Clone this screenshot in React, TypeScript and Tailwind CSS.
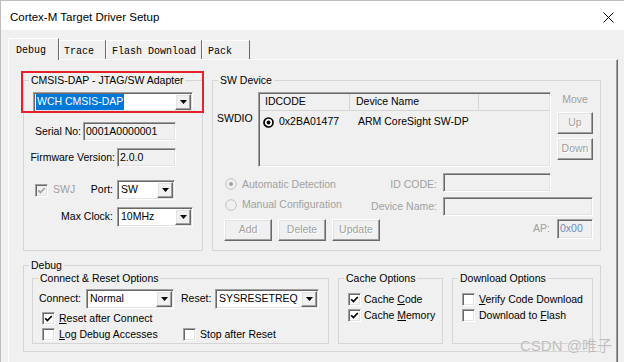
import React from 'react';

const sunken =
  'border border-t-[#a0a0a0] border-l-[#a0a0a0] border-r-white border-b-white shadow-[inset_1px_1px_0_#696969,inset_-1px_-1px_0_#e3e3e3]';
const raised =
  'border border-t-white border-l-white border-r-[#696969] border-b-[#696969] shadow-[inset_-1px_-1px_0_#a0a0a0,inset_1px_1px_0_#e3e3e3]';

function Arrow() {
  return (
    <svg width="7" height="4" viewBox="0 0 7 4">
      <polygon points="0,0 7,0 3.5,4" fill="#000" />
    </svg>
  );
}

function Combo({ className, text, selected }: { className: string; text: string; selected?: boolean }) {
  return (
    <div className={`flex h-[20px] p-[1px] bg-white ${sunken} ${className}`}>
      <div className="flex-1 flex items-center pl-[1px] overflow-hidden whitespace-nowrap">
        {selected ? <span className="bg-[#0078d7] text-white pl-[1px] pr-[1px]">{text}</span> : <span className="pl-[1px]">{text}</span>}
      </div>
      <div className={`w-[16px] h-[16px] bg-[#f0f0f0] flex items-center justify-center ${raised}`}>
        <Arrow />
      </div>
    </div>
  );
}

function Edit({ className, text }: { className: string; text?: string }) {
  return (
    <div className={`h-[19px] bg-[#f0f0f0] flex items-center pl-[2px] ${sunken} ${className}`}>
      {text}
    </div>
  );
}

function Btn({ className, children }: { className: string; children: React.ReactNode }) {
  return (
    <div className={`flex items-center justify-center bg-[#f0f0f0] text-[#a0a0a0] [text-shadow:1px_1px_0_#fff] ${raised} ${className}`}>
      {children}
    </div>
  );
}

function Check({ checked, disabled }: { checked?: boolean; disabled?: boolean }) {
  return (
    <div className={`w-[13px] h-[13px] flex items-center justify-center shrink-0 ${sunken} ${disabled ? 'bg-[#f0f0f0]' : 'bg-white'}`}>
      {checked && (
        <svg width="9" height="9" viewBox="0 0 9 9">
          <path d="M1.2 4.2 L3.4 6.6 L7.8 2" fill="none" stroke={disabled ? '#a0a0a0' : '#000'} strokeWidth="1.7" />
        </svg>
      )}
    </div>
  );
}

function Radio({ on }: { on?: boolean }) {
  return (
    <svg width="12" height="12" viewBox="0 0 12 12" className="shrink-0">
      <circle cx="6" cy="6" r="5.3" fill="#f0f0f0" stroke="#c2c2c2" strokeWidth="1" />
      {on && <circle cx="6" cy="6" r="2" fill="#a0a0a0" />}
    </svg>
  );
}

function Group({ title, className, children }: { title: string; className: string; children: React.ReactNode }) {
  return (
    <fieldset className={`border border-[#d5d5d5] ${className}`}>
      <legend className="ml-[5px] px-[2px] leading-[13px]">{title}</legend>
      {children}
    </fieldset>
  );
}

export default function App() {
  return (
    <div className="relative w-[624px] h-[362px] overflow-hidden bg-[#f0f0f0] border-l border-t border-[#bdbdbd] text-[10.5px] text-black font-['Liberation_Sans',Arial,sans-serif]">
      {/* Title bar */}
      <div className="h-[29px] bg-white flex items-center justify-between pl-[9px] pr-[10px] pt-[4px]">
        <span className="text-[11.5px]">Cortex-M Target Driver Setup</span>
        <svg width="11" height="11" viewBox="0 0 11 11" className="mb-[1px]">
          <path d="M0.5 0.5 L10.5 10.5 M10.5 0.5 L0.5 10.5" stroke="#000" strokeWidth="1" />
        </svg>
      </div>

      {/* Tabs */}
      <div className="flex items-end h-[29px] pt-[8px] pl-[7px] font-['Liberation_Mono',monospace] text-[10px]">
        <div className="relative z-10 -mb-[1px] h-[22px] w-[51px] bg-[#f0f0f0] border-t border-l border-r border-t-white border-l-white border-r-[#696969] pl-[7px] pt-[4px]">
          Debug
        </div>
        <div className="h-[19px] w-[47px] border-t border-l border-r border-t-white border-l-white border-r-[#696969] pl-[4px] pt-[3px]">Trace</div>
        <div className="h-[19px] w-[96px] border-t border-l border-r border-t-white border-l-white border-r-[#696969] pl-[5px] pt-[3px]">Flash Download</div>
        <div className="h-[19px] w-[48px] border-t border-l border-r border-t-white border-l-white border-r-[#696969] pl-[5px] pt-[3px]">Pack</div>
      </div>

      {/* Tab panel */}
      <div className="ml-[7px] w-[610px] h-[303px] border-t border-l border-r border-t-white border-l-white border-r-[#696969] shadow-[inset_-1px_0_0_#a0a0a0] pl-[14px] pt-[14px]">
        <div className="flex gap-[9px]">
          {/* CMSIS-DAP adapter */}
          <Group title="CMSIS-DAP - JTAG/SW Adapter" className="w-[180px]">
            <div className="flow-root h-[163px]">
              <div className="ml-[9px] mt-[5px]">
                <Combo className="w-[160px]" text="WCH CMSIS-DAP" selected />
              </div>
              <div className="flex items-center mt-[10px]">
                <span className="w-[57px] text-right">Serial No:</span>
                <Edit className="ml-[2px] w-[93px]" text="0001A0000001" />
              </div>
              <div className="flex items-center mt-[7px]">
                <span className="w-[91px] text-right">Firmware Version:</span>
                <Edit className="ml-[2px] w-[59px]" text="2.0.0" />
              </div>
              <div className="flex items-center mt-[13px]">
                <div className="w-[89px] flex items-center pl-[11px]">
                  <Check checked disabled />
                  <span className="ml-[5px] text-[#a0a0a0]">SWJ</span>
                  <span className="ml-auto">Port:</span>
                </div>
                <Combo className="ml-[4px] w-[58px]" text="SW" />
              </div>
              <div className="flex items-center mt-[7px]">
                <span className="w-[89px] text-right">Max Clock:</span>
                <Combo className="ml-[4px] w-[76px]" text="10MHz" />
              </div>
            </div>
          </Group>

          {/* SW Device */}
          <Group title="SW Device" className="w-[389px]">
            <div className="flow-root h-[163px]">
              <div className="flex mt-[5px] h-[75px]">
                <div className="w-[45px] pl-[4px] pt-[20px] leading-[13px]">SWDIO</div>
                <div className={`w-[293px] h-[75px] p-[1px] ${sunken}`}>
                  <div className="flex h-[17px] border-b border-[#d5d5d5] items-center">
                    <div className="w-[90px] h-full border-r border-[#d5d5d5] pl-[5px] flex items-center">IDCODE</div>
                    <div className="w-[129px] h-full border-r border-[#d5d5d5] pl-[6px] flex items-center">Device Name</div>
                    <div className="flex-1" />
                  </div>
                  <div className="flex items-center h-[16px] mt-[3px]">
                    <div className="w-[90px] flex items-center pl-[3px]">
                      <svg width="11" height="11" viewBox="0 0 11 11">
                        <circle cx="5.5" cy="5.5" r="4.5" fill="#fff" stroke="#000" strokeWidth="1.7" />
                        <circle cx="5.5" cy="5.5" r="1.9" fill="#000" />
                      </svg>
                      <span className="ml-[5px]">0x2BA01477</span>
                    </div>
                    <span className="pl-[8px]">ARM CoreSight SW-DP</span>
                  </div>
                </div>
                <div className="ml-[6px] w-[36px] flex flex-col items-center">
                  <div className="mt-[1px] leading-[13px] text-[#a0a0a0]">Move</div>
                  <Btn className="mt-[6px] h-[22px] w-[36px]">Up</Btn>
                  <Btn className="mt-[4px] h-[22px] w-[36px]">Down</Btn>
                </div>
              </div>

              <div className="flex mt-[6px]">
                <div className="w-[224px] flex items-start pt-[5px] pl-[12px] text-[#a0a0a0] leading-[13px]">
                  <Radio on />
                  <span className="ml-[5px]">Automatic Detection</span>
                  <span className="ml-auto">ID CODE:</span>
                </div>
                <Edit className="ml-[6px] w-[108px]" />
              </div>
              <div className="flex mt-[5px]">
                <div className="w-[224px] flex items-start pl-[12px] text-[#a0a0a0] leading-[13px]">
                  <div className="flex items-center pt-[1px]">
                    <Radio />
                    <span className="ml-[5px]">Manual Configuration</span>
                  </div>
                  <span className="ml-auto pt-[3px]">Device Name:</span>
                </div>
                <Edit className="ml-[6px] w-[150px]" />
              </div>
              <div className="flex items-start mt-[3px] pr-[7px]">
                <Btn className="ml-[11px] h-[22px] w-[48px]">Add</Btn>
                <Btn className="ml-[6px] h-[22px] w-[48px]">Delete</Btn>
                <Btn className="ml-[6px] h-[22px] w-[48px]">Update</Btn>
                <span className="ml-auto mt-[3px] leading-[13px] text-[#a0a0a0]">AP:</span>
                <div className={`ml-[7px] h-[20px] w-[36px] bg-[#f0f0f0] flex items-center pl-[2px] text-[#6d8cc0] ${sunken}`}>0x00</div>
              </div>
            </div>
          </Group>
        </div>

        {/* Debug */}
        <Group title="Debug" className="mt-[8px] w-[578px]">
          <div className="h-[79px] flex pl-[8px]">
            <Group title="Connect & Reset Options" className="w-[297px] h-fit">
              <div className="flow-root h-[58px]">
                <div className="flex items-center mt-[4px]">
                  <span className="w-[52px] pl-[6px]">Connect:</span>
                  <Combo className="ml-[1px] w-[88px]" text="Normal" />
                  <span className="ml-[7px] w-[34px]">Reset:</span>
                  <Combo className="w-[104px]" text="SYSRESETREQ" />
                </div>
                <div className="flex items-center mt-[3px] h-[13px] pl-[9px]">
                  <Check checked />
                  <span className="ml-[4px]"><span className="underline">R</span>eset after Connect</span>
                </div>
                <div className="flex items-center mt-[3px] h-[13px] pl-[9px]">
                  <div className="w-[141px] flex items-center">
                    <Check />
                    <span className="ml-[4px]"><span className="underline">L</span>og Debug Accesses</span>
                  </div>
                  <Check />
                  <span className="ml-[4px]">Stop after Reset</span>
                </div>
              </div>
            </Group>

            <Group title="Cache Options" className="ml-[9px] w-[105px] h-fit">
              <div className="flow-root h-[58px]">
                <div className="flex items-center mt-[8px] h-[13px] pl-[9px]">
                  <Check checked />
                  <span className="ml-[3px]">Cache <span className="underline">C</span>ode</span>
                </div>
                <div className="flex items-center mt-[3px] h-[13px] pl-[9px]">
                  <Check checked />
                  <span className="ml-[3px]">Cache <span className="underline">M</span>emory</span>
                </div>
              </div>
            </Group>

            <Group title="Download Options" className="ml-[9px] w-[141px] h-fit">
              <div className="flow-root h-[58px]">
                <div className="flex items-center mt-[8px] h-[13px] pl-[9px]">
                  <Check />
                  <span className="ml-[4px]"><span className="underline">V</span>erify Code Download</span>
                </div>
                <div className="flex items-center mt-[3px] h-[13px] pl-[9px]">
                  <Check />
                  <span className="ml-[4px]">Download to <span className="underline">F</span>lash</span>
                </div>
              </div>
            </Group>
          </div>
        </Group>
      </div>

      {/* annotation */}
      <div className="absolute left-[20px] top-[70px] w-[183px] h-[42px] border-2 border-[#e5212b]" />
      <div className="absolute left-[519px] top-[336px] text-[15px] leading-[18px] text-[#bcbcbc] [text-shadow:0_0_1px_#fff] font-['Liberation_Sans','Noto_Sans_CJK_SC',sans-serif]">
        CSDN @唯子
      </div>
    </div>
  );
}
